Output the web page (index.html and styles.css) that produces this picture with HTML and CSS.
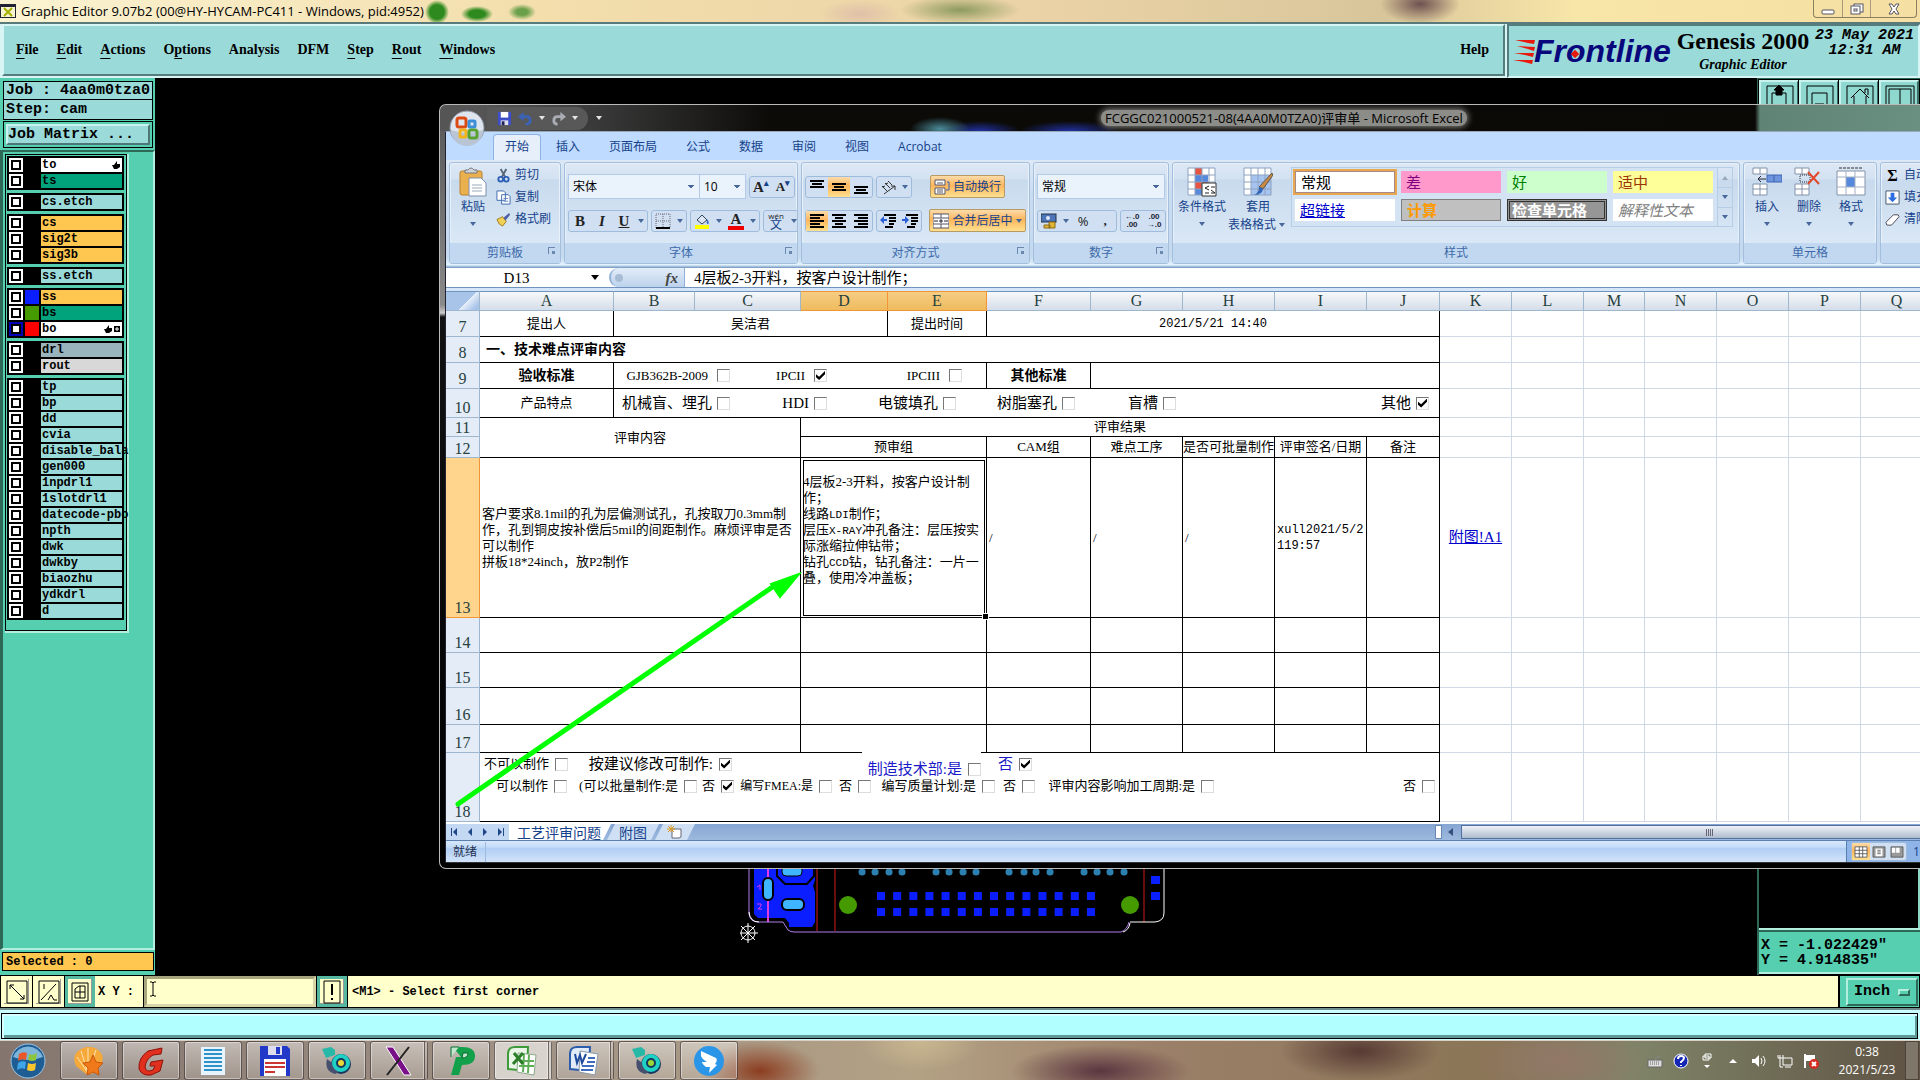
FILE: index.html
```html
<!DOCTYPE html>
<html lang="zh-CN">
<head>
<meta charset="utf-8">
<title>Graphic Editor 9.07b2</title>
<link rel="stylesheet" href="styles.css">
</head>
<body>
<header class="titlebar">
  <svg class="app-icon" viewBox="0 0 16 16"><rect x="0" y="1" width="16" height="14" fill="#223"/><rect x="1" y="4" width="14" height="10" fill="#f6f3d0"/><path d="M4 5l8 8M12 5l-8 8" stroke="#a8b000" stroke-width="2"/></svg>
  <span>Graphic Editor 9.07b2 (00@HY-HYCAM-PC411 - Windows, pid:4952)</span>
  <div class="win-buttons">
    <button aria-label="Minimize"><svg viewBox="0 0 16 12"><rect x="2" y="7" width="12" height="4" rx="1" fill="#fff" stroke="#556"/></svg></button>
    <button aria-label="Restore"><svg viewBox="0 0 16 12"><rect x="5" y="1" width="9" height="8" fill="#fff" stroke="#556"/><rect x="2" y="3" width="9" height="8" fill="#fff" stroke="#556"/><rect x="5" y="6" width="3" height="2" fill="none" stroke="#556"/></svg></button>
    <button class="close" aria-label="Close"><svg viewBox="0 0 16 12"><path d="M3 1h3l2 3 2-3h3l-3 5 3 5h-3l-2-3-2 3H3l3-5z" fill="#fff" stroke="#556"/></svg></button>
  </div>
</header>

<div class="menurow">
  <nav class="menubar">
    <a href="#"><u>F</u>ile</a><a href="#"><u>E</u>dit</a><a href="#"><u>A</u>ctions</a><a href="#">O<u>p</u>tions</a><a href="#">Analysis</a><a href="#">DFM</a><a href="#"><u>S</u>tep</a><a href="#"><u>R</u>out</a><a href="#"><u>W</u>indows</a>
    <a class="help" href="#">Help</a>
  </nav>
  <div class="brand">
    <div class="frontline">
      <svg class="speed" viewBox="0 0 24 26"><path d="M2 2l20 0-1 4-6-1zM4 8l18 1-1 4-6-2zM1 15l20 0-1 4-8-2zM0 22l20 0-1 4-8-2z" fill="#e8190c"/></svg>
      <span class="word">Fr<span class="ring">o</span>ntline</span>
    </div>
    <div class="product"><b>Genesis 2000</b><i>Graphic Editor</i></div>
    <div class="date"><span>23 May 2021</span><span>12:31 AM</span></div>
  </div>
</div>

<main class="workspace">
  <aside class="sidebar">
    <div class="job">
      <div class="field">Job : 4aa0m0tza0</div>
      <div class="field">Step: cam</div>
      <div class="matrix"><button>Job Matrix ...</button></div>
    </div>
    <div class="layer-panel">
      <div class="layers">
        <div class="group">
          <label><input type="checkbox"><i></i><span class="white">to<svg class="hand" viewBox="0 0 8 8"><path d="M0 4h2l3-4v3h3v3L5 8H2z"/></svg></span></label>
          <label><input type="checkbox"><i></i><span class="green">ts</span></label>
        </div>
        <div class="group">
          <label><input type="checkbox"><i></i><span>cs.etch</span></label>
        </div>
        <div class="group">
          <label><input type="checkbox"><i></i><span class="orange">cs</span></label>
          <label><input type="checkbox"><i></i><span class="orange">sig2t</span></label>
          <label><input type="checkbox"><i></i><span class="orange">sig3b</span></label>
        </div>
        <div class="group">
          <label><input type="checkbox"><i></i><span>ss.etch</span></label>
        </div>
        <div class="group">
          <label><input type="checkbox"><i class="c-blue"></i><span class="orange">ss</span></label>
          <label><input type="checkbox"><i class="c-green"></i><span class="green">bs</span></label>
          <label><input type="checkbox" class="active"><i class="c-red"></i><span class="white">bo<svg class="hand two" viewBox="0 0 16 8"><path d="M0 4h2l3-4v3h3v3L5 8H2zM10 1h6v6h-6z"/><path d="M11 4h4M13 2v4" stroke="#fff"/></svg></span></label>
        </div>
        <div class="group">
          <label><input type="checkbox"><i></i><span class="slate">drl</span></label>
          <label><input type="checkbox"><i></i><span class="silver">rout</span></label>
        </div>
        <div class="group">
          <label><input type="checkbox"><i></i><span>tp</span></label>
          <label><input type="checkbox"><i></i><span>bp</span></label>
          <label><input type="checkbox"><i></i><span>dd</span></label>
          <label><input type="checkbox"><i></i><span>cvia</span></label>
          <label><input type="checkbox"><i></i><span>disable_bala</span></label>
          <label><input type="checkbox"><i></i><span>gen000</span></label>
          <label><input type="checkbox"><i></i><span>1npdrl1</span></label>
          <label><input type="checkbox"><i></i><span>1slotdrl1</span></label>
          <label><input type="checkbox"><i></i><span>datecode-pbo</span></label>
          <label><input type="checkbox"><i></i><span>npth</span></label>
          <label><input type="checkbox"><i></i><span>dwk</span></label>
          <label><input type="checkbox"><i></i><span>dwkby</span></label>
          <label><input type="checkbox"><i></i><span>biaozhu</span></label>
          <label><input type="checkbox"><i></i><span>ydkdrl</span></label>
          <label><input type="checkbox"><i></i><span>d</span></label>
        </div>
      </div>
    </div>
    <div class="selected">Selected : 0</div>
  </aside>

  <div class="canvas">
    <svg class="board" viewBox="740 850 440 95">
      <path d="M754 860h61v20l-2 6 2 6v30l-3 5h-23v-4l-4-5h-27l-4-4z" fill="#0a1eff"/>
      <path d="M777 864h37v12l-7 8h-22l-8-8z" fill="#0a1eff" stroke="#000" stroke-width="2"/>
      <rect x="782" y="866" width="20" height="10" rx="4" fill="#3fb4ff" stroke="#000"/>
      <path d="M768 860v62" stroke="#e03be0" stroke-width="2"/>
      <rect x="763" y="878" width="10" height="22" rx="5" fill="#3fb4ff" stroke="#000" stroke-width="2"/>
      <rect x="782" y="899" width="22" height="11" rx="5" fill="#3fb4ff" stroke="#000" stroke-width="2"/>
      <path d="M757 887l3-2v5M757 904h4v2l-3 3h4" stroke="#e03be0" fill="none"/>
      <path d="M817 860v71M835 860v71M1144 860v62" stroke="#d01818"/>
      <path d="M749 860v54q1 8 9 8h25l5 8q3 2 6 2h327q6-2 8-10" stroke="#b07ce8" fill="none"/>
      <path d="M749 912q1 10 10 10M1123 932q6-2 7-9M1130 922h25q9-1 9-9v-53" stroke="#fff" fill="none"/>
      <circle cx="848" cy="905" r="9" fill="#459a00"/><circle cx="1130" cy="905" r="9" fill="#459a00"/>
      <path d="M877 896h219M877 912h219" stroke="#0a1eff" stroke-width="8" stroke-dasharray="8 8.15"/>
      <path d="M1151 876h9v8h-9zM1151 892h9v8h-9z" fill="#0a1eff"/>
      <path d="M862 872h.1M875 872h.1M889 872h.1M902 872h.1M936 872h.1M949 872h.1M963 872h.1M976 872h.1M1009 872h.1M1024 872h.1M1036 872h.1M1050 872h.1M1084 872h.1M1097 872h.1M1110 872h.1M1124 872h.1" stroke="#2c7fae" stroke-width="7" stroke-linecap="round"/>
      <g stroke="#fff" fill="none"><circle cx="748" cy="933" r="7"/><path d="M738 933h20M748 923v20M741 926l14 14M755 926l-14 14"/></g>
    </svg>
    <div class="tools">
      <div class="tiles">
        <button aria-label="Up"><svg viewBox="0 0 32 26"><path d="M4 22V3h26v19" /><path d="M9 22V10h14v12"/><path d="M16 2l5 5h-2v5h-6V7h-2z" fill="#000"/></svg></button>
        <button aria-label="Down"><svg viewBox="0 0 32 26"><path d="M4 22V3h26v19"/><path d="M9 24V10h15v14"/><path d="M12 21h9l-5 5z" fill="#000"/></svg></button>
        <button aria-label="Home"><svg viewBox="0 0 32 26"><path d="M4 22V3h26v19M8 15l9-9 9 9M11 13v10h12V13M22 10V6h3v6"/></svg></button>
        <button aria-label="Zoom XY"><svg viewBox="0 0 32 26"><path d="M3 22V3h28v19M6 22V6h22v16M17 6v16"/></svg></button>
        <button></button><button></button><button></button><button></button>
      </div>
      <div class="preview"></div>
      <div class="coords">X = -1.022429"<br>Y = 4.914835"</div>
    </div>

    <section class="excel">
      <div class="caption">
        <button class="orb" aria-label="Office"><svg viewBox="0 0 36 36"><circle cx="18" cy="18" r="17" fill="#dfe5ee" stroke="#8b94a3"/><path d="M2 20a16 16 0 0 0 32 0q-16 6-32 0z" fill="#b9c4d4"/><g fill="none" stroke-width="3"><rect x="8" y="8" width="9" height="9" rx="2" stroke="#dc4a14"/><rect x="20" y="11" width="6" height="6" rx="1" stroke="#3a8fd8"/><rect x="11" y="20" width="6" height="7" rx="1" stroke="#f3b51b"/><rect x="20" y="20" width="8" height="8" rx="2" stroke="#5aa332"/></g></svg></button>
        <div class="quick">
          <svg viewBox="0 0 16 16"><path d="M1 1h14v14H1z" fill="#3c4fc8"/><path d="M4 1h8v6H4z" fill="#fff"/><path d="M4 10h8v5H4z" fill="#dde"/><path d="M5 11h3v4H5z" fill="#225"/></svg>
          <svg viewBox="0 0 16 16"><path d="M3 6h6q4 0 4 4t-5 4" stroke="#3b62b5" stroke-width="3" fill="none"/><path d="M0 6l6-5v10z" fill="#3b62b5"/></svg>
          <i class="dd light"></i>
          <svg viewBox="0 0 16 16"><path d="M12 6H7q-4 0-4 4t4 4" stroke="#a9adb4" stroke-width="3" fill="none"/><path d="M16 6l-6-5v10z" fill="#a9adb4"/></svg>
          <i class="dd light"></i>
        </div>
        <i class="dd light more"></i>
        <h1>FCGGC021000521-08(4AA0M0TZA0)评审单 - Microsoft Excel</h1>
      </div>

      <div class="client">
        <nav class="tabs"><a class="on" href="#">开始</a><a href="#">插入</a><a href="#">页面布局</a><a href="#">公式</a><a href="#">数据</a><a href="#">审阅</a><a href="#">视图</a><a href="#">Acrobat</a></nav>

        <div class="ribbon">
          <section class="rg clipboard">
            <div class="rb">
              <button class="big"><svg viewBox="0 0 30 30"><rect x="2" y="4" width="22" height="24" rx="2" fill="#eab04e" stroke="#b98230"/><path d="M7 6h12V3h-3q-3-4-6 0H7z" fill="#cfd4dc" stroke="#777"/><path d="M11 11h12l5 5v13H11z" fill="#fff" stroke="#7d8fae"/><path d="M14 18h10M14 21h10M14 24h10" stroke="#9ab"/></svg>粘贴<i class="dd"></i></button>
              <div class="stack">
                <button><svg viewBox="0 0 16 16"><path d="M5 1l5 9M11 1L6 10" stroke="#567" stroke-width="2"/><circle cx="5" cy="12" r="2.500" fill="none" stroke="#2d5fb5" stroke-width="2"/><circle cx="11" cy="12" r="2.500" fill="none" stroke="#2d5fb5" stroke-width="2"/></svg>剪切</button>
                <button><svg viewBox="0 0 16 16"><path d="M1 1h7l2 2v8H1zM6 5h7l2 2v8H6z" fill="#fff" stroke="#3c66ae"/><path d="M8 9h5M8 12h5" stroke="#5b85c8"/></svg>复制</button>
                <button><svg viewBox="0 0 16 16"><path d="M1 8l6-3 4 5-4 5q-4-1-6-7z" fill="#f2cf55" stroke="#9d7a1d"/><path d="M8 6l6-5 1 2-5 6z" fill="#4f5fa5"/></svg>格式刷</button>
              </div>
            </div>
            <h2>剪贴板<i class="launch"></i></h2>
          </section>

          <section class="rg font">
            <div class="rb rows">
              <div class="line">
                <div class="pair"><select class="fname" aria-label="字体"><option>宋体</option></select><select class="fsize" aria-label="字号"><option>10</option></select></div>
                <div class="seg"><button class="ser">A<sup>▴</sup></button><button class="ser sm">A<sup>▾</sup></button></div>
              </div>
              <div class="line">
                <div class="seg"><button class="ser">B</button><button class="ser"><i>I</i></button><button class="ser"><u>U</u></button><i class="dd"></i></div>
                <div class="seg"><button aria-label="边框"><svg viewBox="0 0 16 16"><path d="M1 1h14v14H1zM8 1v14M1 8h14" fill="none" stroke="#667" stroke-dasharray="1 1"/><path d="M1 15h14" stroke="#000" stroke-width="2"/></svg></button><i class="dd"></i></div>
                <div class="seg"><button aria-label="填充颜色"><svg viewBox="0 0 16 16"><path d="M3 7l5-5 5 5-5 4z" fill="#dde6f5" stroke="#345"/><path d="M13 6q3 4 1 5t-1-5" fill="#3a6fc4"/><path d="M1 12h14v4H1z" fill="#ff0"/></svg></button><i class="dd"></i><button class="ser fc">A</button><i class="dd"></i></div>
                <div class="seg"><button class="wen"><small>wén</small>文</button><i class="dd"></i></div>
              </div>
            </div>
            <h2>字体<i class="launch"></i></h2>
          </section>

          <section class="rg align">
            <div class="rb rows">
              <div class="line">
                <div class="seg three"><button aria-label="顶端"><svg viewBox="0 0 16 16"><path d="M1 2h14M3 5h10M1 8h14" class="ln"/></svg></button><button class="hot" aria-label="居中"><svg viewBox="0 0 16 16"><path d="M1 5h14M3 8h10M1 11h14" class="ln"/></svg></button><button aria-label="底端"><svg viewBox="0 0 16 16"><path d="M1 8h14M3 11h10M1 14h14" class="ln"/></svg></button></div>
                <div class="seg"><button aria-label="方向"><svg viewBox="0 0 16 16"><path d="M2 7l5 5M5 4l5 5M8 2l4 4M4 15L15 7M15 7h-4M15 7v4M2 8l3-1M5 5l3-1" stroke="#333" fill="none"/></svg></button><i class="dd"></i></div>
                <button class="hot wrap"><svg viewBox="0 0 16 16"><path d="M1 1h10v5H1zM1 9h10v6H1z" fill="#fff" stroke="#556"/><path d="M13 3h2v8h-3" fill="none" stroke="#2d5fb5"/><path d="M3 4h6M3 11h6M3 13h6" stroke="#556"/></svg>自动换行</button>
              </div>
              <div class="line">
                <div class="seg three"><button class="hot" aria-label="左"><svg viewBox="0 0 16 16"><path d="M1 2h14M1 5h10M1 8h14M1 11h10M1 14h14" class="ln"/></svg></button><button aria-label="中"><svg viewBox="0 0 16 16"><path d="M1 2h14M4 5h8M1 8h14M4 11h8M1 14h14" class="ln"/></svg></button><button aria-label="右"><svg viewBox="0 0 16 16"><path d="M1 2h14M5 5h10M1 8h14M5 11h10M1 14h14" class="ln"/></svg></button></div>
                <div class="seg two"><button aria-label="减少缩进"><svg viewBox="0 0 16 16"><path d="M4 2h12M9 5h7M9 8h7M9 11h5M5 14h8" class="ln"/><path d="M0 7l4-4v3h3v2H4v3z" fill="#2d5fd5"/></svg></button><button aria-label="增加缩进"><svg viewBox="0 0 16 16"><path d="M4 2h12M9 5h7M9 8h7M9 11h5M5 14h8" class="ln"/><path d="M7 7L3 3v3H0v2h3v3z" fill="#2d5fd5"/></svg></button></div>
                <button class="hot wrap merge"><svg viewBox="0 0 16 16"><path d="M0 1h16v14H0z" fill="#fff" stroke="#556"/><path d="M0 5h16M0 11h16M8 1v4M8 11v4" stroke="#556"/><path d="M1 8h4M11 8h4M7 7h2v2H7z" stroke="#223" fill="none"/></svg>合并后居中<i class="dd"></i></button>
              </div>
            </div>
            <h2>对齐方式<i class="launch"></i></h2>
          </section>

          <section class="rg number">
            <div class="rb rows">
              <div class="line"><div class="pair"><select class="nfmt" aria-label="数字格式"><option>常规</option></select></div></div>
              <div class="line">
                <div class="seg"><button aria-label="货币"><svg viewBox="0 0 16 16"><rect x="0" y="1" width="15" height="8" fill="#4d74b8" stroke="#234"/><circle cx="7" cy="5" r="2" fill="#dfe9f8"/><path d="M8 9h6v6H8zM3 12h6v3H3z" fill="#e4b637" stroke="#8a6a12"/></svg></button><i class="dd"></i><button class="pct">%</button><button class="ser">,</button></div>
                <div class="seg two tiny"><button>←.0<br>.00</button><button>.00<br>→.0</button></div>
              </div>
            </div>
            <h2>数字<i class="launch"></i></h2>
          </section>

          <section class="rg styles">
            <div class="rb">
              <button class="big"><svg viewBox="0 0 30 30"><path d="M1 1h27v27H1z" fill="#fff"/><path d="M8 1h7v7H8z" fill="#e8543f"/><path d="M8 8h13v7H8z" fill="#5688dc"/><path d="M8 15h14v7H8z" fill="#e8543f"/><path d="M8 22h7v6H8z" fill="#5688dc"/><path d="M1 1h27v27H1zM1 8h27M1 15h27M1 22h27M8 1v27M15 1v27M22 1v27" fill="none" stroke="#8da2c0"/><path d="M15 16h14v13H15z" fill="#fff" stroke="#333"/><path d="M22 19l-4 2 4 2M18 26h4M24 20h4M24 26h4l-4-3" fill="none" stroke="#222"/></svg>条件格式<i class="dd"></i></button>
              <button class="big"><svg viewBox="0 0 30 30"><path d="M1 1h27v27H1z" fill="#fff"/><path d="M8 8h20v20H8z" fill="#a7c4f0"/><path d="M1 1h27v27H1zM1 8h27M1 15h27M1 22h27M8 1v27M15 1v27M22 1v27" fill="none" stroke="#8da2c0"/><path d="M30 8L20 22l-4-2L29 6z" fill="#c88a45" stroke="#654"/><path d="M20 21q0 7-9 7 5-2 5-8z" fill="#3567b8"/></svg>套用<span>表格格式<i class="dd"></i></span></button>
              <div class="gallery">
                <div class="swatches">
                  <button class="normal">常规</button><button class="bad">差</button><button class="good">好</button><button class="neutral">适中</button>
                  <button class="link">超链接</button><button class="calc">计算</button><button class="check">检查单元格</button><button class="explain">解释性文本</button>
                </div>
                <div class="spin"><button aria-label="上"><i class="dd up"></i></button><button aria-label="下"><i class="dd"></i></button><button aria-label="更多"><i class="dd"></i></button></div>
              </div>
            </div>
            <h2>样式</h2>
          </section>

          <section class="rg cells">
            <div class="rb">
              <button class="big"><svg viewBox="0 0 30 30"><path d="M1 1h14v6H1zM1 17h14v11H1zM8 1v6M8 17v11M1 22h14" fill="#fff" stroke="#8593ab"/><path d="M15 8h15v7H15zM22 8v7" fill="#6d94dd" stroke="#3e65b5"/><path d="M14 12H6l3-3M6 12l3 3" stroke="#223" fill="none"/></svg>插入<i class="dd"></i></button>
              <button class="big"><svg viewBox="0 0 30 30"><path d="M1 1h14v6H1zM1 17h14v11H1zM8 1v6M8 17v11M1 22h14" fill="#fff" stroke="#8593ab"/><path d="M6 8h10v7H6z" fill="none" stroke="#333" stroke-dasharray="1 1"/><path d="M14 5l11 12M25 5L14 17" stroke="#e2492c" stroke-width="2"/></svg>删除<i class="dd"></i></button>
              <button class="big"><svg viewBox="0 0 30 30"><path d="M1 4h28v24H1z" fill="#fff" stroke="#8593ab"/><path d="M10 10h9v10h-9z" fill="#5688dc"/><path d="M1 10h28M1 20h28M10 4v24M19 4v24" stroke="#a5b1c5"/><path d="M3 1h24" stroke="#333" stroke-dasharray="3 1"/></svg>格式<i class="dd"></i></button>
            </div>
            <h2>单元格</h2>
          </section>

          <section class="rg editing">
            <div class="rb">
              <div class="stack">
                <button><b class="sigma">Σ</b>自动求和</button>
                <button><svg viewBox="0 0 16 16"><path d="M1 1h14v14H1z" fill="#fff" stroke="#456"/><path d="M6 3h4v5h3l-5 5-5-5h3z" fill="#2d6fe0"/></svg>填充</button>
                <button><svg viewBox="0 0 16 16"><path d="M1 11l8-8h5l1 2-8 9H2z" fill="#fff" stroke="#445"/></svg>清除</button>
              </div>
            </div>
            <h2></h2>
          </section>
        </div>

        <div class="formula">
          <input class="name" aria-label="名称框" value="D13"><i class="dd dark"></i>
          <span class="fx"><i></i><em>fx</em></span>
          <input class="fbar" aria-label="编辑栏" value="4层板2-3开料，按客户设计制作；">
        </div>

        <div class="sheet">
          <table>
            <colgroup><col class="w-h"><col class="w-a"><col class="w-b"><col class="w-c"><col class="w-d"><col class="w-e"><col class="w-f"><col class="w-g"><col class="w-g"><col class="w-g"><col class="w-j"><col class="w-k"><col class="w-k"><col class="w-m"><col class="w-k"><col class="w-k"><col class="w-k"><col class="w-k"></colgroup>
            <thead><tr><th class="corner"></th><th>A</th><th>B</th><th>C</th><th class="sel">D</th><th class="sel">E</th><th>F</th><th>G</th><th>H</th><th>I</th><th>J</th><th>K</th><th>L</th><th>M</th><th>N</th><th>O</th><th>P</th><th>Q</th></tr></thead>
            <tbody>
            <tr class="h26"><th>7</th><td>提出人</td><td colspan="3">吴洁君</td><td>提出时间</td><td class="mono" colspan="5">2021/5/21 14:40</td><td class="g"></td><td class="g"></td><td class="g"></td><td class="g"></td><td class="g"></td><td class="g"></td><td class="g"></td></tr>
            <tr class="h26"><th>8</th><td class="l big-b" colspan="10">一、技术难点评审内容</td><td class="g"></td><td class="g"></td><td class="g"></td><td class="g"></td><td class="g"></td><td class="g"></td><td class="g"></td></tr>
            <tr class="h26"><th>9</th><td class="big-b">验收标准</td><td class="l" colspan="4"><div class="checks std"><label>GJB362B-2009<input type="checkbox"></label><label>IPCII<input type="checkbox" checked></label><label>IPCIII<input type="checkbox"></label></div></td><td class="big-b">其他标准</td><td colspan="4"></td><td class="g"></td><td class="g"></td><td class="g"></td><td class="g"></td><td class="g"></td><td class="g"></td><td class="g"></td></tr>
            <tr class="h29"><th>10</th><td>产品特点</td><td class="l" colspan="9"><div class="checks feat"><label>机械盲、埋孔<input type="checkbox"></label><label>HDI<input type="checkbox"></label><label>电镀填孔<input type="checkbox"></label><label>树脂塞孔<input type="checkbox"></label><label>盲槽<input type="checkbox"></label><label>其他<input type="checkbox" checked></label></div></td><td class="g"></td><td class="g"></td><td class="g"></td><td class="g"></td><td class="g"></td><td class="g"></td><td class="g"></td></tr>
            <tr class="h19"><th>11</th><td colspan="3" rowspan="2">评审内容</td><td colspan="7">评审结果</td><td class="g"></td><td class="g"></td><td class="g"></td><td class="g"></td><td class="g"></td><td class="g"></td><td class="g"></td></tr>
            <tr class="h21"><th>12</th><td colspan="2">预审组</td><td>CAM组</td><td>难点工序</td><td>是否可批量制作</td><td>评审签名/日期</td><td>备注</td><td class="g"></td><td class="g"></td><td class="g"></td><td class="g"></td><td class="g"></td><td class="g"></td><td class="g"></td></tr>
            <tr class="h160"><th class="sel">13</th><td class="l" colspan="3">客户要求8.1mil的孔为层偏测试孔，孔按取刀0.3mm制<br>作，孔到铜皮按补偿后5mil的间距制作。麻烦评审是否<br>可以制作<br>拼板18*24inch，放P2制作</td><td class="l cur" colspan="2">4层板2-3开料，按客户设计制<br>作；<br>线路<span class="half">LDI</span>制作；<br>层压<span class="half">X-RAY</span>冲孔备注：层压按实<br>际涨缩拉伸钻带；<br>钻孔<span class="half">CCD</span>钻，钻孔备注：一片一<br>叠，使用冷冲盖板；</td><td class="l">/</td><td class="l">/</td><td class="l">/</td><td class="l mono">xull2021/5/2<br>119:57</td><td></td><td class="g"><a href="#">附图!A1</a></td><td class="g"></td><td class="g"></td><td class="g"></td><td class="g"></td><td class="g"></td><td class="g"></td></tr>
            <tr class="h35"><th>14</th><td colspan="3"></td><td colspan="2"></td><td></td><td></td><td></td><td></td><td></td><td class="g"></td><td class="g"></td><td class="g"></td><td class="g"></td><td class="g"></td><td class="g"></td><td class="g"></td></tr>
            <tr class="h35"><th>15</th><td colspan="3"></td><td colspan="2"></td><td></td><td></td><td></td><td></td><td></td><td class="g"></td><td class="g"></td><td class="g"></td><td class="g"></td><td class="g"></td><td class="g"></td><td class="g"></td></tr>
            <tr class="h37"><th>16</th><td colspan="3"></td><td colspan="2"></td><td></td><td></td><td></td><td></td><td></td><td class="g"></td><td class="g"></td><td class="g"></td><td class="g"></td><td class="g"></td><td class="g"></td><td class="g"></td></tr>
            <tr class="h28"><th>17</th><td colspan="3"></td><td colspan="2"></td><td></td><td></td><td></td><td></td><td></td><td class="g"></td><td class="g"></td><td class="g"></td><td class="g"></td><td class="g"></td><td class="g"></td><td class="g"></td></tr>
            <tr class="h69"><th>18</th><td class="l top" colspan="10">
              <div class="checks verdict"><label class="s">不可以制作<input type="checkbox"></label><label>按建议修改可制作:<input type="checkbox" checked></label><label class="blue patch">制造技术部:是<input type="checkbox"></label><label class="blue">否<input type="checkbox" checked></label></div>
              <div class="checks plan"><label>可以制作<input type="checkbox"></label><label>(可以批量制作:是<input type="checkbox"></label><label>否<input type="checkbox" checked></label><label class="tight">编写FMEA:是<input type="checkbox"></label><label>否<input type="checkbox"></label><label>编写质量计划:是<input type="checkbox"></label><label>否<input type="checkbox"></label><label>评审内容影响加工周期:是<input type="checkbox"></label><label>否<input type="checkbox"></label></div>
            </td><td class="g"></td><td class="g"></td><td class="g"></td><td class="g"></td><td class="g"></td><td class="g"></td><td class="g"></td></tr>
            </tbody>
          </table>
          <svg class="pointer" viewBox="0 0 360 250"><path d="M12 242L325 26" stroke="#0f0" stroke-width="5" stroke-linecap="round"/><path d="M353 12L334 35 325 22z" fill="#0f0" stroke="#0f0" stroke-width="2"/></svg>
        </div>

        <div class="sheetbar">
          <div class="nav"><button aria-label="首"><svg viewBox="0 0 8 8"><path d="M7 0v8L3 4zM1 0h1v8H1z"/></svg></button><button aria-label="前"><svg viewBox="0 0 8 8"><path d="M6 0v8L2 4z"/></svg></button><button aria-label="后"><svg viewBox="0 0 8 8"><path d="M2 0v8l4-4z"/></svg></button><button aria-label="末"><svg viewBox="0 0 8 8"><path d="M1 0v8l4-4zM6 0h1v8H6z"/></svg></button></div>
          <a class="st on" href="#">工艺评审问题</a><a class="st" href="#">附图</a><a class="st new" href="#" aria-label="新工作表"><svg viewBox="0 0 16 14"><path d="M5 4h9v8l-2 1H5z" fill="#fff" stroke="#667"/><path d="M4 0v7M0 4h8M1 1l6 6M7 1L1 7" stroke="#e09a20"/></svg></a>
          <div class="hscroll"><i class="split"></i><i class="tri"></i><div class="thumb"><i></i></div></div>
        </div>
        <footer class="status"><span class="ready">就绪</span><div class="views"><div class="seg"><button class="hot" aria-label="普通"><svg viewBox="0 0 16 14"><path d="M1 1h14v12H1zM1 5h14M1 9h14M6 1v12M10 1v12" fill="#fff" stroke="#555"/></svg></button><button aria-label="页面布局"><svg viewBox="0 0 16 14"><path d="M1 1h14v12H1z" fill="#999" stroke="#555"/><path d="M4 3h8v9H4z" fill="#fff"/><path d="M6 5h4M6 7h4M6 9h4" stroke="#555"/></svg></button><button aria-label="分页预览"><svg viewBox="0 0 16 14"><path d="M1 1h14v12H1z" fill="#999" stroke="#555"/><path d="M2 2h4v6H2zM7 2h4v6H7z" fill="#fff"/></svg></button></div><span>100%</span></div></footer>
      </div>
    </section>
  </div>
</main>

<div class="prompt">
  <button aria-label="Line"><svg viewBox="0 0 22 24"><path d="M1 1h20v22H1z"/><path d="M4 5l14 14M4 9V5h4M18 15v4h-4"/></svg></button>
  <button aria-label="Ratio"><svg viewBox="0 0 22 24"><path d="M1 1h20v22H1z"/><path d="M3 20L18 4M6 4v5M10 20l3-5 3 5h3"/></svg></button>
  <button class="teal" aria-label="Grid"><svg viewBox="0 0 22 24"><path d="M3 3h16v18H3z"/><path d="M6 18V9l4-3h6v12zM6 12h10M11 6v12"/></svg></button>
  <label for="xy">X Y :</label>
  <div class="entry"><input id="xy" value=""><svg class="ibeam" viewBox="0 0 8 16"><path d="M1 1h2l1 1 1-1h2M4 2v12M1 15h2l1-1 1 1h2"/></svg></div>
  <button class="teal" aria-label="Alert"><svg viewBox="0 0 22 24"><path d="M3 1h16v22H3z"/><path d="M11 4v11M11 18v2" stroke-width="2"/></svg></button>
  <div class="message">&lt;M1&gt; - Select first corner</div>
  <div class="unit"><button>Inch<i></i></button></div>
</div>
<div class="bottombar"><div></div></div>

<footer class="taskbar">
  <button class="start" aria-label="Start"><svg viewBox="0 0 36 36"><circle cx="18" cy="18" r="17" fill="#1d5d94" stroke="#9cc6e2"/><path d="M3 14a16 16 0 0 1 30 0q-15 6-30 0z" fill="#7db4d8"/><path d="M9 11q4-3 8-1l-1 7q-4-2-8 1z" fill="#e8582a"/><path d="M19 11q4 2 8-1l-1 7q-4 2-8 0z" fill="#8cc63f"/><path d="M8 20q4-3 8-1l-1 7q-4-2-8 1z" fill="#3fa4e8"/><path d="M18 20q4 2 8 0l-1 7q-4 2-8 0z" fill="#fbc62b"/></svg></button>
  <div class="apps">
    <button aria-label="Shell"><svg viewBox="0 0 32 32"><path d="M13 29L3 21Q-1 12 4 7l4-3 5-2h6l5 2 4 4q4 6-1 13l-8 8z" fill="#f6a93b"/><path d="M15 28L4 12M15 28L8 6M15 28l0-25M15 28L23 5" stroke="#fde3b0" stroke-width="1"/><path d="M20 10l3 7 7 1-5 5 1 7-6-3-6 3 1-7-5-5 7-1z" fill="#f07a1a" stroke="#c8560c"/></svg></button>
    <button aria-label="G"><svg viewBox="0 0 32 32"><path d="M27 3L13 6Q3 13 4 24q3 7 12 6l9-4 3-11-12 2-1 4 5 0-2 4q-7 3-8-3 1-8 8-12l8-1z" fill="#e2301e" stroke="#8c1208"/></svg></button>
    <button aria-label="Notes"><svg viewBox="0 0 32 32"><path d="M4 2h24v28H4z" fill="#e8f4fc"/><path d="M7 5h18M7 9h18M7 13h18M7 17h18M7 21h18M7 25h18" stroke="#2e93c8" stroke-width="2"/></svg></button>
    <button aria-label="Save"><svg viewBox="0 0 32 32"><path d="M1 1h27l3 3v27H1z" fill="#2238c8"/><path d="M9 1h14v9H9z" fill="#dde"/><path d="M17 2h4v7h-4z" fill="#2238c8"/><path d="M5 14h22v17H5z" fill="#fff"/><path d="M6 18h20M6 22h20M6 27h10" stroke="#c33" stroke-width="2"/></svg></button>
    <button aria-label="Genesis"><svg viewBox="0 0 32 32"><path d="M1 4l9-2 4 3v5l-9 3z" fill="#28b8a8"/><circle cx="20" cy="19" r="10" fill="#17375e"/><path d="M6 14q-3 12 8 15l4-2-8-10z" fill="#46506e"/><circle cx="20" cy="18" r="7" fill="none" stroke="#1fd0c4" stroke-width="4"/><circle cx="20" cy="18" r="3" fill="#e8d83a"/></svg></button>
    <button class="multi" aria-label="X"><svg viewBox="0 0 32 32"><path d="M4 2h7l18 28h-7z" fill="#7a1087" stroke="#fff"/><path d="M27 2L5 30" stroke="#222" stroke-width="2"/></svg></button>
    <button aria-label="P"><svg viewBox="0 0 32 32"><path d="M8 2h9q13 0 13 9t-13 9l-3 10H6l5-18h5" fill="#13a04a"/><path d="M6 12V2h8M18 8h5q0 5-6 5z" fill="#bfe8cc" stroke="#0a6b30"/></svg></button>
    <button class="multi lit" aria-label="Excel"><svg viewBox="0 0 32 32"><path d="M2 9q0-8 9-7h11l-1 24-19-2z" fill="#e9f5e6" stroke="#3f9a3a" stroke-width="2"/><path d="M12 8l18 2-2 20-17-3z" fill="#fff" stroke="#8a8"/><path d="M14 16h14M13 21h15M18 9l-1 18M23 10l-1 18" stroke="#5fae57" stroke-width="2"/><path d="M8 8l9 11M17 8L7 19" stroke="#2b7d28" stroke-width="3"/></svg></button>
    <button class="multi" aria-label="Word"><svg viewBox="0 0 32 32"><path d="M2 9q0-8 9-7h11l-1 24-19-2z" fill="#e2ebf8" stroke="#2d5caa" stroke-width="2"/><path d="M12 6l18 3-3 21-16-3z" fill="#fff" stroke="#89a"/><path d="M20 13h7M19 17h8M14 21h12M13 25h12" stroke="#3d6cc0" stroke-width="2"/><path d="M7 9l2 9 3-8 2 8 4-9" fill="none" stroke="#1f4a9c" stroke-width="2"/></svg></button>
    <button aria-label="Genesis 2"><svg viewBox="0 0 32 32"><path d="M1 4l9-2 4 3v5l-9 3z" fill="#28b8a8"/><circle cx="20" cy="19" r="10" fill="#17375e"/><path d="M6 14q-3 12 8 15l4-2-8-10z" fill="#46506e"/><circle cx="20" cy="18" r="7" fill="none" stroke="#1fd0c4" stroke-width="4"/><circle cx="20" cy="18" r="3" fill="#9ad83a"/></svg></button>
    <button aria-label="DingTalk"><svg viewBox="0 0 32 32"><circle cx="16" cy="16" r="15" fill="#2b95e8"/><path d="M8 6l15 7q2 2-1 6l2 1-8 8 1-6h-4q-4-3-4-5l5 0q-5-3-6-6z" fill="#fff"/></svg></button>
  </div>
  <div class="tray">
    <svg viewBox="0 0 16 16"><path d="M1 7h14v7H1z" fill="#ddd" stroke="#666"/><path d="M3 9h10M3 11h10" stroke="#666" stroke-dasharray="1 1"/><path d="M8 7q0-3 5-4" stroke="#888" fill="none"/></svg>
    <svg viewBox="0 0 16 16"><circle cx="8" cy="8" r="7" fill="#1526b5" stroke="#fff"/><path d="M5 6q0-3 3-3t3 2-3 4v1M8 12v1" stroke="#fff" stroke-width="2" fill="none"/></svg>
    <svg viewBox="0 0 16 16"><path d="M6 1h6v4H6zM4 3h6v4H4z" fill="none" stroke="#fff"/><path d="M5 12h6l-3 3z" fill="#fff"/></svg>
    <svg viewBox="0 0 16 16"><path d="M4 10h8L8 6z" fill="#fff"/></svg>
    <svg viewBox="0 0 16 16"><path d="M1 6h3l4-4v12l-4-4H1z" fill="#fff"/><path d="M10 5q2 3 0 6M12 3q4 5 0 10" stroke="#fff" fill="none"/></svg>
    <svg viewBox="0 0 16 16"><path d="M6 5h9v7H6zM8 14h6M3 8V2M1 2v3h5V2M3 8v6h3" stroke="#fff" fill="none"/></svg>
    <svg viewBox="0 0 16 16"><path d="M2 1v14" stroke="#fff" stroke-width="2"/><path d="M3 2h9v6H3z" fill="#fff"/><circle cx="11" cy="11" r="5" fill="#d62a1e"/><path d="M9 9l4 4M13 9l-4 4" stroke="#fff" stroke-width="2"/></svg>
    <time>0:38<br>2021/5/23</time>
    <button class="desk" aria-label="Show desktop"></button>
  </div>
</footer>
</body>
</html>
```
FILE: styles.css
```css
* { box-sizing: border-box; }
html, body { margin: 0; }
body { display: flex; flex-direction: column; height: 100vh; overflow: hidden; background: #000; color: #000; font: 12px/16px "Open Sans", "Noto Sans CJK SC", sans-serif; }
button { margin: 0; padding: 0; border: 0; background: none; font: inherit; color: inherit; display: flex; align-items: center; justify-content: center; }
input, select { margin: 0; font: inherit; color: inherit; border-radius: 0; }
a { color: inherit; text-decoration: none; }
svg { display: block; }

/* Outer window caption */
.titlebar { flex: none; height: 22px; display: flex; align-items: center; gap: 5px; background: radial-gradient(ellipse 12px 12px at 437px 12px, #2e8a1e 60%, transparent), radial-gradient(ellipse 16px 8px at 477px 14px, #2e8a1e 50%, transparent), radial-gradient(ellipse 14px 8px at 522px 12px, #6ba04a 40%, transparent), radial-gradient(ellipse 40px 14px at 860px 14px, #dfc0a8, transparent), radial-gradient(ellipse 60px 14px at 960px 10px, #8d9a60, transparent), radial-gradient(ellipse 40px 20px at 1420px 4px, #6d5150, transparent), linear-gradient(90deg, #fbf3d2, #f3deac 28%, #ead2a6 55%, #d8c69a 72%, #f8e5a8 82%, #f5dfa2); }
.titlebar span { flex: 1; font-size: 13px; }
.app-icon { width: 16px; height: 16px; }
.win-buttons { display: flex; align-self: flex-start; height: 18px; margin-right: 3px; border: 1px solid #8b7f62; border-top: 0; border-radius: 0 0 4px 4px; }
.win-buttons button { width: 28px; }
.win-buttons button + button { border-left: 1px solid #a69a78; }
.win-buttons .close { width: 46px; }
.win-buttons svg { width: 16px; height: 12px; }

/* Menu row */
.menurow { flex: none; height: 56px; display: flex; gap: 2px; background: #d8f4f4; border-top: 2px solid #587a7a; }
.menubar, .brand { background: #9adbda; border: 2px solid; border-color: #d6f5f4 #567d7d #567d7d #d6f5f4; }
.menubar { flex: 1; display: flex; align-items: center; gap: 18px; padding: 0 14px 0 12px; margin: 0 0 2px 2px; font: bold 14px/18px "Liberation Serif", serif; }
.menubar u { text-underline-offset: 4px; }
.help { margin-left: auto; }
.brand { width: 413px; display: flex; align-items: center; border-color: #567d7d #d6f5f4 #d6f5f4 #567d7d; }
.frontline { display: flex; align-items: center; padding-left: 4px; width: 166px; flex: none; }
.speed { width: 24px; height: 26px; margin-right: -3px; }
.word { font: italic bold 32px/36px "Liberation Sans", sans-serif; color: #08087c; }
.ring { position: relative; }
.ring::after { content: ""; position: absolute; left: 6px; top: 18px; width: 6px; height: 6px; background: #e8190c; transform: rotate(45deg); }
.product { display: flex; flex-direction: column; align-items: center; width: 136px; flex: none; font-family: "Liberation Serif", serif; }
.product b { font-size: 24px; line-height: 28px; white-space: nowrap; }
.product i { font-size: 14px; line-height: 20px; font-weight: bold; }
.date { flex: 1; display: flex; flex-direction: column; align-items: center; align-self: flex-start; padding-top: 2px; font: italic bold 15px/15px "Liberation Mono", monospace; white-space: nowrap; }

/* Sidebar */
.workspace { flex: 1; display: flex; min-height: 0; }
.sidebar { width: 155px; flex: none; display: flex; flex-direction: column; background: #55cfb0; font: bold 12px/14px "Liberation Mono", monospace; }
.job { padding: 3px 2px 0 3px; font-size: 15px; }
.field { height: 19px; padding: 0 2px; border: 1px solid #000; background: #9adbda; line-height: 18px; white-space: nowrap; }
.field + .field { height: 20px; border-top: 0; line-height: 20px; }
.matrix { margin: 1px 0 2px; padding: 2px; border: 1px solid #000; }
.matrix button { width: 100%; height: 21px; justify-content: flex-start; background: #9adbda; border: 2px solid; border-color: #c9f1ee #4d7776 #4d7776 #c9f1ee; }
.layer-panel { flex: 1; padding: 2px 0 0 3px; border: 2px solid; border-color: #2e6958 #b3efdf #b3efdf #2e6958; border-width: 2px 2px 2px 3px; }
.layers { width: 122px; margin-left: -1px; padding: 1px 2px 10px 1px; border: 1px solid #000; box-shadow: 1px 1px 0 1px #b3efdf; display: flex; flex-direction: column; gap: 3px; }
.group { display: grid; gap: 2px; padding: 2px; background: #000; width: 117px; }
.group label { display: grid; grid-template-columns: 14px 14px 81px; gap: 2px; height: 14px; }
.group input { appearance: none; width: 14px; height: 14px; border: 2px solid #fff; background: #fff; box-shadow: inset 0 0 0 2px #000; }
.group .active { border-color: #0000b4; }
.group span { background: #9adbda; padding-left: 1px; white-space: nowrap; display: flex; align-items: center; justify-content: space-between; }
.group .white { background: #fff; }
.group .green { background: #00a37c; }
.group .orange { background: #ffc650; }
.group .slate { background: #9ab4be; }
.group .silver { background: #d8d8d8; }
.c-blue { background: #0a1eff; }
.c-green { background: #459a00; }
.c-red { background: #f00; }
.hand { width: 8px; height: 8px; margin-right: 2px; }
.hand.two { width: 16px; }
.selected { height: 19px; margin: 2px 1px 4px 2px; padding-left: 3px; border: 1px solid #000; background: #ffc650; line-height: 18px; }

/* Drawing canvas */
.canvas { flex: 1; position: relative; overflow: hidden; background: #000; display: flex; justify-content: flex-end; }
.board { position: absolute; left: 585px; top: 772px; width: 440px; height: 95px; }
.tools { width: 163px; display: flex; flex-direction: column; border-left: 2px solid #2e6958; padding-bottom: 1px; }
.tiles { display: grid; grid-template-columns: repeat(4, 40px); grid-auto-rows: 32px; padding-top: 2px; background: #2e6958; }
.tiles button { background: #8fd8cf; border: 2px solid; border-color: #c9f1ee #3d6e66 #3d6e66 #c9f1ee; outline: 1px solid #000; }
.tiles svg { width: 32px; height: 26px; fill: none; stroke: #000; stroke-width: 1; }
.preview { flex: 1; border-right: 2px solid #8fd8c8; }
.coords { padding: 8px 0 4px 2px; background: #55cfb0; border-top: 2px solid #b3efdf; border-bottom: 2px solid #b3efdf; box-shadow: inset 0 2px #2e6958; font: bold 15px/15px "Liberation Mono", monospace; }

/* Spreadsheet window */
.excel { position: absolute; left: 284px; top: 26px; right: 0; padding: 0 0 5px 5px; border: solid #b9bab9; border-width: 1px 0 1px 1px; border-radius: 7px 0 0 7px; background: linear-gradient(180deg, #555 0, #8a8a8a 200px, #ccc 208px, #111 212px, #000); }
.caption { height: 26px; margin-left: -5px; display: flex; align-items: center; border-radius: 7px 0 0 0; background: radial-gradient(ellipse 30px 12px at 500px 24px, #4a8a98, transparent), radial-gradient(ellipse 40px 10px at 540px 26px, #2030a0, transparent), radial-gradient(ellipse 50px 10px at 630px 26px, #2030a0, transparent), linear-gradient(90deg, #555 40px, #333 180px, #0c0b08 330px, #0a0906 1315px, #5f8475 1320px, #6a9082); }
.orb { width: 36px; height: 36px; margin: 20px 0 0 9px; z-index: 2; }
.orb svg { width: 36px; height: 36px; }
.quick { display: flex; align-items: center; gap: 6px; height: 23px; padding: 0 10px; border-radius: 0 12px 12px 0; background: #585858; margin-left: 2px; }
.quick svg { width: 15px; height: 15px; }
.dd { flex: none; width: 0; height: 0; margin: 0 3px; border: 3px solid transparent; border-top: 4px solid #48689c; border-bottom: 0; }
.dd.light { border-top-color: #e4e4e4; margin: 0; }
.dd.up { border-top: 0; border-bottom: 4px solid #9aa8bb; }
.dd.dark { border-width: 5px 4px 0; border-top-color: #000; margin: 0 4px; }
.more { margin: 0 8px !important; }
.caption h1 { margin: 0 auto 0 491px; padding: 0 4px; font: 13px/16px "Open Sans", "Noto Sans CJK SC", sans-serif; white-space: nowrap; color: #000; background: #8c8c88; border-radius: 8px; box-shadow: 0 0 6px 1px #8c8c88; }
.client { border-top: 1px solid #98a8b8; border-left: 1px solid #223; }

.tabs { height: 28px; display: flex; align-items: flex-end; background: #bfdbff; padding-left: 47px; color: #15428b; }
.tabs a { padding: 0 14px; margin-right: 1px; line-height: 26px; height: 26px; }
.tabs .on { padding: 0 11px; background: #e6effa; border: 1px solid #8db2e3; border-bottom: 0; border-radius: 4px 4px 0 0; line-height: 24px; }

.ribbon { height: 108px; display: flex; gap: 3px; padding: 2px 0 0 3px; background: linear-gradient(#dce8f6, #cbdcf0 30%, #c5d9ef 90%, #e3f4ff 97%, #6f93bd); overflow: hidden; color: #15428b; }
.rg { flex: none; height: 102px; display: flex; flex-direction: column; border: 1px solid #a4bfdb; border-radius: 3px; background: linear-gradient(#dde8f4, #d3e1f1 16px, #c8daed 17px, #dae8f6 80px, #dfeaf7); box-shadow: inset 0 0 0 1px #e8f1fa; overflow: hidden; }
.rg h2 { margin: 0; height: 20px; position: relative; font: 12px/18px "Noto Sans CJK SC", sans-serif; text-align: center; color: #3e6aaa; background: #c1d8f0; }
.rb { flex: 1; display: flex; padding: 4px; }
.rows { flex-direction: column; justify-content: space-between; padding: 11px 3px 10px; }
.line { display: flex; gap: 3px; align-items: center; height: 25px; }
.launch { position: absolute; right: 5px; top: 4px; width: 7px; height: 7px; border: solid #6b87b0; border-width: 1px 0 0 1px; }
.launch::after { content: ""; position: absolute; right: 0; bottom: 0; width: 3px; height: 3px; background: #6b87b0; }
.clipboard { width: 112px; } .font { width: 234px; } .align { width: 229px; } .number { width: 136px; } .styles { width: 568px; } .cells { width: 134px; } .editing { width: 134px; }
.big { flex-direction: column; justify-content: flex-start; gap: 1px; line-height: 18px; width: 42px; }
.big svg { width: 30px; height: 30px; }
.big > .dd { margin-top: 5px; }
.big span { display: flex; align-items: center; line-height: 16px; }
.clipboard .big { width: 38px; }
.stack { display: flex; flex-direction: column; }
.stack button { height: 22px; gap: 4px; justify-content: flex-start; white-space: nowrap; }
.stack svg, .sigma { width: 15px; height: 15px; flex: none; }
.sigma { font: bold 16px/15px "Liberation Serif", serif; color: #000; }
.clipboard .stack { padding-left: 4px; margin-top: -3px; }
.editing .stack { margin-top: -3px; }
.pair { display: flex; }
select { appearance: none; height: 25px; padding: 0 4px; border: 1px solid #b2cbe8; background: linear-gradient(45deg, transparent 50%, #48689c 50%) right 8px center / 3px 4px no-repeat, linear-gradient(-45deg, transparent 50%, #48689c 50%) right 5px center / 3px 4px no-repeat, #eaf2fb; color: #000; }
.fname { width: 132px; } .fsize { width: 46px; border-left: 0; } .nfmt { width: 128px; }
.seg { display: flex; align-items: center; height: 22px; border: 1px solid #9fbcdd; border-radius: 3px; background: #d0e0f2; }
.seg button { width: 22px; height: 20px; }
.seg svg { width: 16px; height: 16px; }
.ln { stroke: #000; stroke-width: 2; fill: none; }
.ser { font: bold 15px/18px "Liberation Serif", serif; color: #222; }
.ser.sm { font-size: 13px; }
.ser sup { font-size: 9px; line-height: 6px; align-self: flex-start; padding-top: 3px; color: #15428b; }
.fc { border-bottom: 4px solid #e00; line-height: 12px; }
.seg .fc { width: 16px; height: 18px; margin: 0 3px; }
.seg .wen { flex-direction: column; font-size: 12px; line-height: 10px; width: 24px; }
.wen small { font-size: 8px; line-height: 8px; color: #222; }
.hot { background: linear-gradient(#fbdcaa, #fdb65c 45%, #fee090); }
.wrap { height: 23px; width: 75px; gap: 3px; border: 1px solid #b89a64; border-radius: 2px; white-space: nowrap; margin-left: 15px; }
.wrap svg { width: 16px; height: 16px; flex: none; }
.merge { width: 97px; margin-left: 4px; }
.merge .dd { margin: 0; }
.number .ser, .pct { color: #222; font-size: 13px; }
.tiny button { font: bold 8px/8px "Liberation Sans", sans-serif; color: #223; }
.styles .big { width: 52px; margin-left: -1px; }
.styles .big + .big { width: 62px; }
.gallery { display: flex; margin-left: 2px; height: 60px; border: 1px solid #b5cde6; }
.swatches { display: grid; grid-template-columns: repeat(4, 100px); grid-auto-rows: 22px; gap: 6px; padding: 3px 4px 0 3px; background: #d4e3f3; }
.swatches button { justify-content: flex-start; padding-left: 5px; font: 15px/18px "Noto Sans CJK SC", sans-serif; background: #fff; }
.swatches .normal { color: #000; outline: 2px solid #e8a850; border: 1px solid #a88; }
.swatches .bad { background: #f9c; color: #800080; }
.swatches .good { background: #cfc; color: #008000; }
.swatches .neutral { background: #ff9; color: #930; }
.swatches .link { color: #00c; text-decoration: underline; }
.swatches .calc { background: #c0c0c0; border: 1px solid #7f7f7f; color: #f90; font-weight: bold; }
.swatches .check { background: #969696; border: 3px double #333; color: #fff; font-weight: bold; padding-left: 2px; }
.swatches .explain { color: #808080; font-style: italic; }
.spin { display: grid; width: 15px; grid-template-rows: repeat(3, 1fr); border-left: 1px solid #b5cde6; }
.spin button + button { border-top: 1px solid #b5cde6; }
.cells .rb { padding: 4px 2px; }

.formula { height: 20px; display: flex; align-items: center; background: #fff; border-bottom: 1px solid #6f93bd; font: 15px/18px "Liberation Serif", "Noto Sans CJK SC", serif; }
.formula input { border: 0; padding: 0; height: 18px; background: #fff; outline: 0; }
.name { width: 141px; text-align: center; }
.fx { width: 76px; height: 19px; display: flex; align-items: center; justify-content: space-between; padding: 0 6px 0 4px; margin-left: 6px; border-radius: 10px 0 0 10px; background: linear-gradient(#e3edf9, #bcd2ec); border-left: 2px solid #8fb0d8; border-right: 1px solid #8fb0d8; }
.fx i { width: 8px; height: 8px; border-radius: 4px; background: #a9bcd6; }
.fx em { font-weight: bold; color: #444; }
.formula .fbar { flex: 1; padding-left: 9px; }

/* Grid */
.sheet { position: relative; height: 536px; border-top: 3px solid #d5e6f8; background: #fff; overflow: hidden; }
table { border-collapse: separate; border-spacing: 0; table-layout: fixed; width: 1486px; font: 13px/16px "Liberation Serif", "Noto Sans CJK SC", serif; }
.w-h { width: 34px; } .w-a { width: 134px; } .w-b { width: 81px; } .w-c { width: 106px; } .w-d { width: 87px; } .w-e { width: 99px; } .w-f { width: 104px; } .w-g { width: 92px; } .w-j { width: 73px; } .w-k { width: 72px; } .w-m { width: 61px; }
th { padding: 0; font-weight: normal; font-size: 16px; line-height: 18px; color: #27413e; border: solid #9eb6ce; border-width: 0 1px 1px 0; background: #e4ecf7; }
thead th { height: 20px; background: linear-gradient(#f7f9fb, #d5dde9); border-top: 1px solid #6f93bd; }
thead .corner { background: linear-gradient(135deg, #a9c4e9 60%, #e8f0fa 60%, #a9c4e9 88%); }
thead .sel { background: linear-gradient(#f6cd84, #eebb5e); border-color: #f29536; }
tbody th { vertical-align: bottom; }
tbody th.sel { background: #ffd58d; border-color: #f29536; }
td { padding: 0; height: 100%; text-align: center; white-space: nowrap; border: solid #000; border-width: 0 1px 1px 0; overflow: visible; }
td.g { border-color: #d0d7e5; }
td.l { text-align: left; padding-left: 2px; }
td.big-b { font-weight: bold; font-size: 14px; }
td.l.big-b { padding-left: 6px; }
td.mono { font: 12px/16px "Liberation Mono", monospace; }
.half { font: 11px/14px "Liberation Mono", monospace; }
td.cur { position: relative; padding-bottom: 16px; outline: 1px solid #000; outline-offset: -3px; box-shadow: -1px 0 #000, 0 -1px #000; }
td.cur::after { content: ""; position: absolute; right: -3px; bottom: -3px; width: 5px; height: 5px; background: #000; border: 1px solid #fff; }
td.top { vertical-align: top; padding: 0; }
td a { font-size: 15px; color: #00c; text-decoration: underline; }
.h26 { height: 26px; } .h29 { height: 29px; } .h19 { height: 19px; } .h21 { height: 21px; } .h160 { height: 160px; } .h35 { height: 35px; } .h37 { height: 37px; } .h28 { height: 28px; } .h69 { height: 69px; }
.h19 th, .h21 th { line-height: 16px; }
.checks { display: grid; grid-template-rows: 22px; justify-items: end; align-items: center; height: 22px; margin-left: -2px; }
.checks label { display: flex; align-items: center; gap: 6px; line-height: 20px; }
.checks input { appearance: none; width: 13px; height: 13px; border: 1px solid; border-color: #777 #ddd #ddd #777; background: #fff; }
.checks input:checked::before { content: ""; display: block; width: 9px; height: 9px; margin: 1px; background: #000; clip-path: polygon(0 35%, 35% 65%, 100% 0, 100% 35%, 35% 100%, 0 70%); }
.std { grid-template-columns: 116px 97px 135px; }
.std label { gap: 9px; }
.feat { grid-template-columns: 116px 97px 129px 119px 101px 253px; font-size: 15px; }
.feat label { gap: 5px; }
.verdict { grid-template-columns: 88px 164px 249px 51px; font-size: 15px; }
.plan { grid-template-columns: 87px 130px 37px 98px 39px 124px 40px 179px 221px; }
.verdict, .plan { margin-left: 0; }
.checks .s { font-size: 13px; }
.checks .tight { font-size: 12px; }
.blue { color: #1a1ac8; }
.patch { align-self: start; height: 34px; margin-top: -1px; padding-left: 6px; background: #fff; }
.pointer { position: absolute; left: 0; top: 271px; width: 360px; height: 250px; fill: none; }

.sheetbar { height: 17px; display: flex; background: linear-gradient(#86a5d2, #9db9de); border-bottom: 1px solid #5d7fb0; font: 14px/16px "Noto Sans CJK SC", sans-serif; color: #15428b; }
.nav { display: flex; width: 63px; background: #c2d8f3; }
.nav button { flex: 1; }
.nav svg { width: 8px; height: 8px; fill: #1f4788; }
.st { padding: 0 8px; background: #cfe0f5; clip-path: polygon(0 0, 100% 0, calc(100% - 8px) 100%, 0 100%); white-space: nowrap; }
.st.on { background: #fff; padding-right: 10px; }
.st + .st { clip-path: polygon(8px 0, 100% 0, calc(100% - 8px) 100%, 0 100%); margin-left: -4px; padding: 0 12px; }
.st.new { padding-top: 1px !important; }
.st.new svg { width: 16px; height: 14px; }
.hscroll { margin-left: auto; display: flex; align-items: center; width: 485px; }
.split { width: 7px; height: 14px; background: #fff; border: 1px solid #6888b8; }
.tri { margin: 0 8px 0 6px; border: 4px solid transparent; border-right: 5px solid #35507f; border-left: 0; }
.thumb { flex: 1; height: 14px; border: 1px solid #52709f; border-right: 0; background: linear-gradient(#eef2f7, #aebccd); display: flex; align-items: center; justify-content: center; }
.thumb i { width: 8px; height: 7px; margin-left: 38px; background: repeating-linear-gradient(90deg, #667 0 1px, transparent 1px 2px); }
.status { height: 22px; display: flex; align-items: center; justify-content: space-between; background: linear-gradient(#d8e8fb, #c3dbf8 30%, #b0cef4 35%, #d2e4fa); color: #15428b; border-bottom: 1px solid #333; }
.ready { padding: 0 8px 0 7px; border-right: 1px solid #9dbbe3; line-height: 20px; color: #1e2f4f; }
.views { display: flex; align-items: center; height: 21px; width: 74px; padding-left: 4px; gap: 6px; background: #8fb4e8; border-left: 1px solid #567db1; overflow: hidden; }
.views .seg { flex: none; height: 19px; }
.views .seg button { width: 18px; height: 17px; }
.views svg { width: 14px; height: 12px; }

/* Prompt and status rows */
.prompt { flex: none; height: 33px; display: flex; padding: 1px; gap: 1px; background: #000; font: bold 12px/16px "Liberation Mono", monospace; }
.prompt > button { width: 31px; background: #ffffcc; border: 3px solid #ffffcc; box-shadow: inset -1px -1px #999; }
.prompt > .teal { border-color: #55b8a0; width: 30px; }
.prompt svg { width: 22px; height: 24px; fill: none; stroke: #000; }
.prompt label { width: 48px; padding-left: 3px; background: #ffffcc; line-height: 32px; margin-left: -1px; }
.entry { position: relative; width: 172px; }
.entry input { width: 100%; height: 100%; border: 3px solid #a8a67e; border-right-color: #d8d6a8; border-bottom-color: #d8d6a8; background: #ffffcc; }
.prompt .ibeam { position: absolute; left: 5px; top: 5px; width: 8px; height: 16px; }
.message { flex: 1; padding-left: 4px; background: #ffffcc; line-height: 33px; }
.unit { width: 79px; padding: 2px 1px 1px 6px; background: #55cfb0; margin-left: 1px; }
.unit button { width: 100%; height: 28px; gap: 8px; border: 2px solid; border-color: #b3efdf #2e6958 #2e6958 #b3efdf; font-size: 15px; }
.unit i { width: 12px; height: 7px; border: 2px solid; border-color: #b3efdf #2e6958 #2e6958 #b3efdf; }
.bottombar { flex: none; height: 32px; padding: 3px 2px 2px 1px; background: #c9ffff; border-top: 2px solid #718c8c; }
.bottombar div { height: 26px; border: 1px solid #000; background: #b2ffff; box-shadow: inset 2px 2px #d8ffff, inset -2px -3px #5f9a9a; }

/* Taskbar */
.taskbar { flex: none; height: 40px; display: flex; align-items: center; border-top: 1px solid #d8d0c4; background: radial-gradient(ellipse 60px 30px at 760px 30px, #8c3d20, transparent), radial-gradient(ellipse 60px 30px at 920px 0, #c9b790, transparent), radial-gradient(ellipse 90px 26px at 1100px 30px, #5a3540, transparent), radial-gradient(ellipse 80px 30px at 1360px 10px, #573a34, transparent), radial-gradient(ellipse 90px 40px at 1560px 20px, #927868, transparent), linear-gradient(90deg, #84766e, #a29486 30%, #b3a184 48%, #9c8069 60%, #8a7556 78%, #7f8468 85%, #5f5344); color: #fff; }
.start { width: 56px; }
.start svg { width: 36px; height: 36px; }
.apps { display: flex; gap: 4px; margin-left: 4px; align-self: stretch; }
.apps button { width: 58px; border: 1px solid rgba(40, 30, 30, .6); border-radius: 3px; background: linear-gradient(rgba(255, 255, 255, .45), rgba(255, 255, 255, .15)); box-shadow: inset 0 0 0 1px rgba(255, 255, 255, .4); }
.apps .multi { border-right: 4px double rgba(40, 30, 30, .6); }
.apps .lit { background: rgba(255, 255, 255, .6); }
.apps svg { width: 32px; height: 32px; }
.tray { margin-left: auto; display: flex; align-items: center; gap: 10px; align-self: stretch; }
.tray svg { width: 16px; height: 16px; }
.tray time { width: 68px; margin-left: 4px; text-align: center; line-height: 18px; }
.tray .desk { width: 14px; align-self: stretch; margin: 0 1px 0 -6px; border: 1px solid #4d4338; background: rgba(255, 255, 255, .2); }
```
